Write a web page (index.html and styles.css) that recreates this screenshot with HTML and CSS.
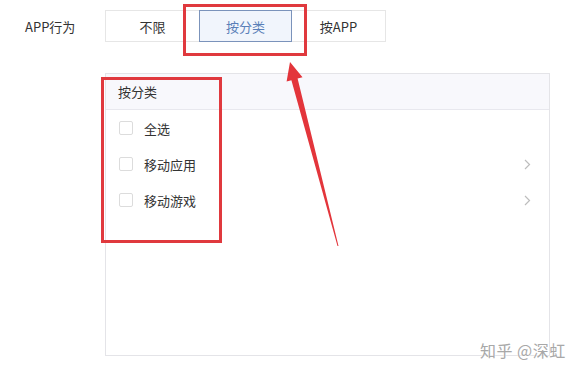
FILE: index.html
```html
<!DOCTYPE html>
<html lang="zh-CN">
<head>
    <meta charset="UTF-8" />
    <title>APP行为</title>
    <link rel="stylesheet" href="styles.css">
</head>
<body>
    <div class="page">
        <div class="form-row">
            <span class="form-label">APP行为</span>
            <div class="segmented">
                <div class="seg-item">不限</div>
                <div class="seg-item active">按分类</div>
                <div class="seg-item">按APP</div>
            </div>
        </div>

        <div class="panel">
            <div class="panel-header">按分类</div>
            <div class="panel-list">
                <div class="list-row">
                    <span class="checkbox"></span>
                    <span class="row-text">全选</span>
                </div>
                <div class="list-row">
                    <span class="checkbox"></span>
                    <span class="row-text">移动应用</span>
                    <svg class="chevron" width="7" height="11" viewBox="0 0 7 11"><path d="M1 1l4.5 4.5L1 10" fill="none" stroke="#bdbdbd" stroke-width="1.2"/></svg>
                </div>
                <div class="list-row">
                    <span class="checkbox"></span>
                    <span class="row-text">移动游戏</span>
                    <svg class="chevron" width="7" height="11" viewBox="0 0 7 11"><path d="M1 1l4.5 4.5L1 10" fill="none" stroke="#bdbdbd" stroke-width="1.2"/></svg>
                </div>
            </div>
        </div>

        <!-- 标注 -->
        <div class="mark mark-tab"></div>
        <div class="mark mark-list"></div>
        <svg class="arrow" width="586" height="374" viewBox="0 0 586 374">
            <polygon points="290,62 302.5,77.2 297.6,78.5 338.5,246 337.5,246 291.4,80.3 286.6,81.6" fill="#e3353b"/>
        </svg>
        <div class="watermark">知乎 @深虹</div>
    </div>
</body>
</html>
```

FILE: styles.css
```css
/* 基础 */
body {
    margin: 0;
    font-family: "Noto Sans CJK SC", "Noto Sans", sans-serif;
    font-size: 13px;
    color: #333;
    background-color: #fff;
}

.page {
    position: relative;
    width: 586px;
    height: 374px;
    overflow: hidden;
}

/* 表单行 */
.form-row {
    display: flex;
    align-items: center;
    padding-top: 10px;
}

.form-label {
    width: 105px;
    flex-shrink: 0;
    padding-left: 25px;
    box-sizing: border-box;
}

.segmented {
    display: flex;
    height: 32px;
    border: 1px solid #e6e6e6;
    box-sizing: border-box;
}

.seg-item {
    width: 93px;
    box-sizing: border-box;
    display: flex;
    align-items: center;
    justify-content: center;
    border: 1px solid transparent;
    margin: -1px 0;
}

.seg-item.active {
    background-color: #f1f5fc;
    border-color: #7b93bb;
    color: #5a7fb8;
}

/* 面板 */
.panel {
    margin: 31px 0 0 105px;
    width: 445px;
    height: 283px;
    border: 1px solid #e4e4e8;
    box-sizing: border-box;
}

.panel-header {
    height: 35px;
    display: flex;
    align-items: center;
    padding-left: 12px;
    background-color: #f8f8fc;
    border-bottom: 1px solid #e8e8ee;
}

.list-row {
    height: 36px;
    display: flex;
    align-items: center;
    padding: 0 18px 0 13px;
}

.checkbox {
    width: 12px;
    height: 12px;
    border: 1px solid #dcdcdc;
    border-radius: 2px;
    margin-right: 11px;
}

.row-text {
    flex: 1;
}

.chevron {
    display: block;
}

/* 标注 */
.mark {
    position: absolute;
    border: 3px solid #e0393e;
    box-sizing: border-box;
}

.mark-tab {
    left: 183px;
    top: 4px;
    width: 124px;
    height: 52px;
}

.mark-list {
    left: 101px;
    top: 77px;
    width: 121px;
    height: 166px;
}

.arrow {
    position: absolute;
    left: 0;
    top: 0;
}

.watermark {
    position: absolute;
    left: 480px;
    top: 338px;
    font-size: 16px;
    color: #a8a8a8;
    text-shadow: 0 0 1px #fff, 0 0 2px #fff;
    letter-spacing: 0.5px;
}
```
